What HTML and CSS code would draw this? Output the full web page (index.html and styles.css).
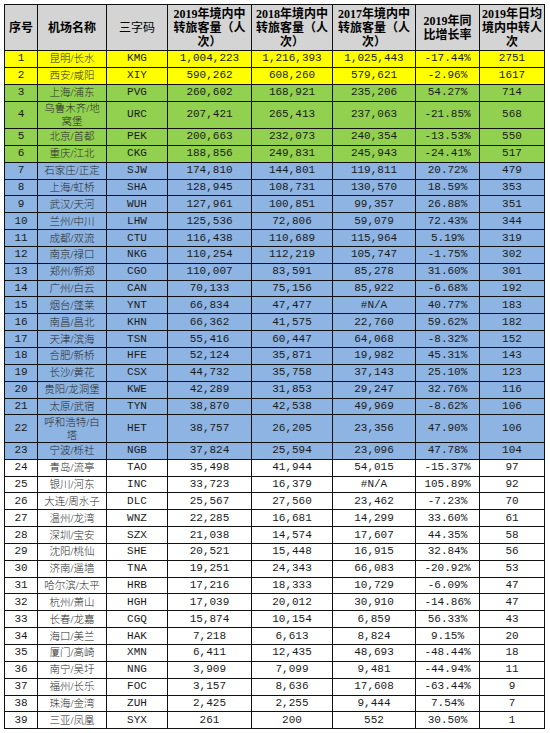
FILE: index.html
```html
<!DOCTYPE html>
<html lang="zh-CN">
<head>
<meta charset="utf-8">
<title>机场境内中转旅客量</title>
<link rel="stylesheet" href="styles.css">
</head>
<body>
<table class="sheet">
<colgroup>
<col class="c1"><col class="c2"><col class="c3"><col class="c4"><col class="c5"><col class="c6"><col class="c7"><col class="c8">
</colgroup>
<thead>
<tr class="head">
<th>序号</th><th>机场名称</th><th class="light">三字码</th>
<th>2019年境内中<br>转旅客量（人<br>次）</th>
<th>2018年境内中<br>转旅客量（人<br>次）</th>
<th>2017年境内中<br>转旅客量（人<br>次）</th>
<th>2019年同<br>比增长率</th>
<th>2019年日均<br>境内中转人<br>次</th>
</tr>
</thead>
<tbody>
<tr class="r yellow"><td>1</td><td>昆明/长水</td><td>KMG</td><td>1,004,223</td><td>1,216,393</td><td>1,025,443</td><td>-17.44%</td><td>2751</td></tr>
<tr class="r yellow"><td>2</td><td>西安/咸阳</td><td>XIY</td><td>590,262</td><td>608,260</td><td>579,621</td><td>-2.96%</td><td>1617</td></tr>
<tr class="r green"><td>3</td><td>上海/浦东</td><td>PVG</td><td>260,602</td><td>168,921</td><td>235,206</td><td>54.27%</td><td>714</td></tr>
<tr class="r2 green"><td>4</td><td>乌鲁木齐/地<br>窝堡</td><td>URC</td><td>207,421</td><td>265,413</td><td>237,063</td><td>-21.85%</td><td>568</td></tr>
<tr class="r green"><td>5</td><td>北京/首都</td><td>PEK</td><td>200,663</td><td>232,073</td><td>240,354</td><td>-13.53%</td><td>550</td></tr>
<tr class="r green"><td>6</td><td>重庆/江北</td><td>CKG</td><td>188,856</td><td>249,831</td><td>245,943</td><td>-24.41%</td><td>517</td></tr>
<tr class="r blue"><td>7</td><td>石家庄/正定</td><td>SJW</td><td>174,810</td><td>144,801</td><td>119,811</td><td>20.72%</td><td>479</td></tr>
<tr class="r blue"><td>8</td><td>上海/虹桥</td><td>SHA</td><td>128,945</td><td>108,731</td><td>130,570</td><td>18.59%</td><td>353</td></tr>
<tr class="r blue"><td>9</td><td>武汉/天河</td><td>WUH</td><td>127,961</td><td>100,851</td><td>99,357</td><td>26.88%</td><td>351</td></tr>
<tr class="r blue"><td>10</td><td>兰州/中川</td><td>LHW</td><td>125,536</td><td>72,806</td><td>59,079</td><td>72.43%</td><td>344</td></tr>
<tr class="r blue"><td>11</td><td>成都/双流</td><td>CTU</td><td>116,438</td><td>110,689</td><td>115,964</td><td>5.19%</td><td>319</td></tr>
<tr class="r blue"><td>12</td><td>南京/禄口</td><td>NKG</td><td>110,254</td><td>112,219</td><td>105,747</td><td>-1.75%</td><td>302</td></tr>
<tr class="r blue"><td>13</td><td>郑州/新郑</td><td>CGO</td><td>110,007</td><td>83,591</td><td>85,278</td><td>31.60%</td><td>301</td></tr>
<tr class="r blue"><td>14</td><td>广州/白云</td><td>CAN</td><td>70,133</td><td>75,156</td><td>85,922</td><td>-6.68%</td><td>192</td></tr>
<tr class="r blue"><td>15</td><td>烟台/蓬莱</td><td>YNT</td><td>66,834</td><td>47,477</td><td>#N/A</td><td>40.77%</td><td>183</td></tr>
<tr class="r blue"><td>16</td><td>南昌/昌北</td><td>KHN</td><td>66,362</td><td>41,575</td><td>22,760</td><td>59.62%</td><td>182</td></tr>
<tr class="r blue"><td>17</td><td>天津/滨海</td><td>TSN</td><td>55,416</td><td>60,447</td><td>64,068</td><td>-8.32%</td><td>152</td></tr>
<tr class="r blue"><td>18</td><td>合肥/新桥</td><td>HFE</td><td>52,124</td><td>35,871</td><td>19,982</td><td>45.31%</td><td>143</td></tr>
<tr class="r blue"><td>19</td><td>长沙/黄花</td><td>CSX</td><td>44,732</td><td>35,758</td><td>37,143</td><td>25.10%</td><td>123</td></tr>
<tr class="r blue"><td>20</td><td>贵阳/龙洞堡</td><td>KWE</td><td>42,289</td><td>31,853</td><td>29,247</td><td>32.76%</td><td>116</td></tr>
<tr class="r blue"><td>21</td><td>太原/武宿</td><td>TYN</td><td>38,870</td><td>42,538</td><td>49,969</td><td>-8.62%</td><td>106</td></tr>
<tr class="r2 blue"><td>22</td><td>呼和浩特/白<br>塔</td><td>HET</td><td>38,757</td><td>26,205</td><td>23,356</td><td>47.90%</td><td>106</td></tr>
<tr class="r blue"><td>23</td><td>宁波/栎社</td><td>NGB</td><td>37,824</td><td>25,594</td><td>23,096</td><td>47.78%</td><td>104</td></tr>
<tr class="r"><td>24</td><td>青岛/流亭</td><td>TAO</td><td>35,498</td><td>41,944</td><td>54,015</td><td>-15.37%</td><td>97</td></tr>
<tr class="r"><td>25</td><td>银川/河东</td><td>INC</td><td>33,723</td><td>16,379</td><td>#N/A</td><td>105.89%</td><td>92</td></tr>
<tr class="r"><td>26</td><td>大连/周水子</td><td>DLC</td><td>25,567</td><td>27,560</td><td>23,462</td><td>-7.23%</td><td>70</td></tr>
<tr class="r"><td>27</td><td>温州/龙湾</td><td>WNZ</td><td>22,285</td><td>16,681</td><td>14,299</td><td>33.60%</td><td>61</td></tr>
<tr class="r"><td>28</td><td>深圳/宝安</td><td>SZX</td><td>21,038</td><td>14,574</td><td>17,607</td><td>44.35%</td><td>58</td></tr>
<tr class="r"><td>29</td><td>沈阳/桃仙</td><td>SHE</td><td>20,521</td><td>15,448</td><td>16,915</td><td>32.84%</td><td>56</td></tr>
<tr class="r"><td>30</td><td>济南/遥墙</td><td>TNA</td><td>19,251</td><td>24,343</td><td>66,083</td><td>-20.92%</td><td>53</td></tr>
<tr class="r"><td>31</td><td>哈尔滨/太平</td><td>HRB</td><td>17,216</td><td>18,333</td><td>10,729</td><td>-6.09%</td><td>47</td></tr>
<tr class="r"><td>32</td><td>杭州/萧山</td><td>HGH</td><td>17,039</td><td>20,012</td><td>30,910</td><td>-14.86%</td><td>47</td></tr>
<tr class="r"><td>33</td><td>长春/龙嘉</td><td>CGQ</td><td>15,874</td><td>10,154</td><td>6,859</td><td>56.33%</td><td>43</td></tr>
<tr class="r"><td>34</td><td>海口/美兰</td><td>HAK</td><td>7,218</td><td>6,613</td><td>8,824</td><td>9.15%</td><td>20</td></tr>
<tr class="r"><td>35</td><td>厦门/高崎</td><td>XMN</td><td>6,411</td><td>12,435</td><td>48,693</td><td>-48.44%</td><td>18</td></tr>
<tr class="r"><td>36</td><td>南宁/吴圩</td><td>NNG</td><td>3,909</td><td>7,099</td><td>9,481</td><td>-44.94%</td><td>11</td></tr>
<tr class="r"><td>37</td><td>福州/长乐</td><td>FOC</td><td>3,157</td><td>8,636</td><td>17,608</td><td>-63.44%</td><td>9</td></tr>
<tr class="r"><td>38</td><td>珠海/金湾</td><td>ZUH</td><td>2,425</td><td>2,255</td><td>9,444</td><td>7.54%</td><td>7</td></tr>
<tr class="r"><td>39</td><td>三亚/凤凰</td><td>SYX</td><td>261</td><td>200</td><td>552</td><td>30.50%</td><td>1</td></tr>
</tbody>
</table>
</body>
</html>
```
FILE: styles.css
```css
html, body {
  margin: 0;
  padding: 0;
  background: #ffffff;
}
body {
  padding: 4px;
}
.sheet {
  border-collapse: collapse;
  table-layout: fixed;
  width: 540px;
  font-family: "Liberation Mono", "Noto Sans CJK SC", monospace;
  font-size: 11px;
  color: #1a1a1a;
}
.c1 { width: 33px; }
.c2 { width: 69px; }
.c3 { width: 61px; }
.c4 { width: 84px; }
.c5 { width: 81px; }
.c6 { width: 83px; }
.c7 { width: 64px; }
.c8 { width: 65px; }
.sheet th,
.sheet td {
  border: 1px solid #111;
  padding: 0;
  text-align: center;
  vertical-align: middle;
  overflow: hidden;
  white-space: nowrap;
}
.sheet td {
  line-height: 13px;
}
.sheet td:nth-child(2) {
  font-family: "Liberation Serif", "Noto Sans CJK SC", serif;
  font-size: 10.5px;
  font-weight: 300;
  color: #2a2a2a;
}
.head {
  height: 46px;
  background: #d4d4d4;
}
.sheet th {
  font-family: "Liberation Serif", "Noto Sans CJK SC", serif;
  font-size: 12px;
  font-weight: bold;
  line-height: 14px;
  color: #000;
}
.sheet th.light {
  font-weight: normal;
}
.r { height: 16.85px; }
.r2 { height: 27.5px; }
.yellow { background: #ffff00; }
.green { background: #92d050; }
.blue { background: #8db4e2; }
```
